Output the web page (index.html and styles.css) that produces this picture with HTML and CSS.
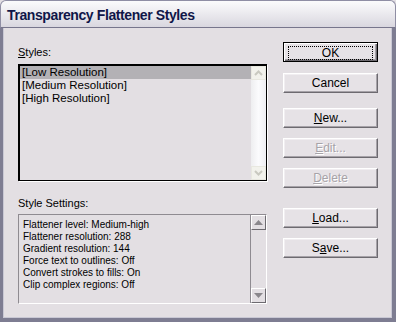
FILE: index.html
```html
<!DOCTYPE html>
<html>
<head>
<meta charset="utf-8">
<link rel="stylesheet" href="styles.css">
</head>
<body>
<div class="window">
  <div class="titlebar"><span class="title">Transparency Flattener Styles</span></div>
  <div class="client">
    <div class="left">
      <div class="label"><u>S</u>tyles:</div>
      <div class="listbox">
        <div class="items">
          <div class="item sel">[Low Resolution]</div>
          <div class="item">[Medium Resolution]</div>
          <div class="item">[High Resolution]</div>
        </div>
        <div class="xpscroll">
          <div class="xpbtn"><svg width="9" height="6" viewBox="0 0 9 6"><path d="M1 5 L4.5 1.5 L8 5" fill="none" stroke="#c9c9c0" stroke-width="2"/></svg></div>
          <div class="xptrack"></div>
          <div class="xpbtn"><svg width="9" height="6" viewBox="0 0 9 6"><path d="M1 1 L4.5 4.5 L8 1" fill="none" stroke="#c9c9c0" stroke-width="2"/></svg></div>
        </div>
      </div>
      <div class="label label2">Style Settings:</div>
      <div class="settings">
        <div class="lines">
          <div>Flattener level: Medium-high</div>
          <div>Flattener resolution: 288</div>
          <div>Gradient resolution: 144</div>
          <div>Force text to outlines: Off</div>
          <div>Convert strokes to fills: On</div>
          <div>Clip complex regions: Off</div>
        </div>
        <div class="clscroll">
          <div class="clbtn"><svg width="9" height="5" viewBox="0 0 9 5"><path d="M4.5 0 L9 5 L0 5 Z" fill="#8a878c"/></svg></div>
          <div class="cltrack"></div>
          <div class="clbtn"><svg width="9" height="5" viewBox="0 0 9 5"><path d="M0 0 L9 0 L4.5 5 Z" fill="#8a878c"/></svg></div>
        </div>
      </div>
    </div>
    <div class="right">
      <button class="btn default"><span class="focus">OK</span></button>
      <button class="btn">Cancel</button>
      <button class="btn g1"><u>N</u>ew...</button>
      <button class="btn dis"><u>E</u>dit...</button>
      <button class="btn dis"><u>D</u>elete</button>
      <button class="btn g2"><u>L</u>oad...</button>
      <button class="btn">S<u>a</u>ve...</button>
    </div>
  </div>
</div>
</body>
</html>
```
FILE: styles.css
```css
html, body { margin: 0; padding: 0; background: #e3dfe3; }
.window {
  width: 396px; height: 322px; box-sizing: border-box;
  display: flex; flex-direction: column;
  background: #e3dfe3;
  font-family: "Liberation Sans", Arial, sans-serif;
  overflow: hidden;
}
.titlebar {
  height: 28px; box-sizing: border-box;
  background: linear-gradient(#fbfbfc 0%, #eeedf1 40%, #d9d7df 100%);
  border: 1px solid #8f8ea4; border-bottom: 1px solid #77768c;
  border-radius: 6px 6px 0 0;
  padding: 5px 0 0 6px;
}
.title {
  font-family: "Liberation Sans", Arial, sans-serif;
  font-weight: bold; font-size: 14px; color: #101648;
  letter-spacing: -0.4px;
}
.client {
  flex: 1; display: flex;
  border-left: 3px solid #7e7d92; border-right: 4px solid #7e7d92; border-bottom: 4px solid #7e7d92;
  box-shadow: inset 1px 0 0 #c9c8d4, inset -1px 0 0 #c9c8d4, inset 0 -1px 0 #c9c8d4;
}
.left { width: 249px; margin-left: 15px; padding-top: 18px; }
.label { font-size: 11px; line-height: 13px; color: #000; height: 13px; }
.label2 { margin-top: 16px; }
.listbox {
  margin-top: 5px; height: 117px; box-sizing: border-box;
  border: 1px solid #000;
  border-top-width: 2px; border-left-width: 2px;
  box-shadow: 1px 1px 0 #fff;
  display: flex;
}
.items { flex: 1; }
.item { font-size: 11.5px; line-height: 13px; height: 13px; padding-left: 2px; color: #000; }
.item.sel { background: #b3b1b5; }
.xpscroll { width: 15px; display: flex; flex-direction: column; }
.xpbtn {
  height: 14px; box-sizing: border-box; border: 1px solid #e8e8e0;
  background: #f2f2ec; display: flex; align-items: center; justify-content: center;
}
.xptrack { flex: 1; background: linear-gradient(90deg, #eeeef0, #fbfbfd 50%, #eeeef2); }
.settings {
  margin-top: 4px; height: 90px; box-sizing: border-box;
  border-top: 1px solid #8f8b91; border-left: 1px solid #8f8b91;
  border-bottom: 1px solid #fff; border-right: 1px solid #fff;
  display: flex;
}
.lines {
  flex: 1; padding: 4px 0 0 4px;
  font-family: "Liberation Sans", Arial, sans-serif; font-size: 10px; line-height: 12px; color: #000;
}
.clscroll { width: 15px; display: flex; flex-direction: column; border-left: 1px solid #8f8b91; }
.clbtn {
  height: 15px; box-sizing: border-box;
  border-top: 1px solid #fff; border-left: 1px solid #fff;
  border-right: 1px solid #6d6a70; border-bottom: 1px solid #6d6a70;
  background: #e3dfe3; display: flex; align-items: center; justify-content: center;
}
.cltrack { flex: 1; }
.right { margin-left: 16px; padding-top: 14px; display: flex; flex-direction: column; width: 95px; }
.btn {
  width: 95px; height: 20px; box-sizing: border-box; padding: 0;
  margin: 0 0 10px 0;
  font-family: "Liberation Sans", Arial, sans-serif; font-size: 12px; color: #000;
  background: #e6e2e6;
  border: 1px solid; border-color: #fff #6d6a70 #6d6a70 #fff;
  box-shadow: inset -1px -1px 0 #a6a2a8, inset 1px 1px 0 #f1eef1;
}
.btn.default {
  border: 1px solid #000;
  box-shadow: inset 1px 1px 0 #fff, inset -1px -1px 0 #6d6a70, inset -2px -2px 0 #a6a2a8;
  margin-bottom: 11px; padding: 3px 4px;
}
.focus {
  display: block; height: 12px; line-height: 12px; border: 1px dotted #000;
}
.btn.g1 { margin-top: 5px; }
.btn.g2 { margin-top: 10px; }
.btn.dis { color: #a7a3a8; text-shadow: 1px 1px 0 #fff; }
```
